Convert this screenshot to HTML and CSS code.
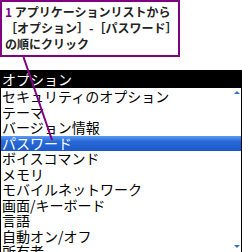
FILE: index.html
```html
<!DOCTYPE html>
<html lang="ja">
<head>
    <meta charset="UTF-8">
    <meta name="viewport" content="width=device-width, initial-scale=1.0">
    <title>オプション - パスワード</title>
    <link rel="stylesheet" href="styles.css">
</head>
<body>
    <div class="page">
        <!-- Step callout -->
        <div class="callout">
            <p class="callout-text"><span class="step">1</span> アプリケーションリストから<br>［オプション］-［パスワード］<br>の順にクリック</p>
        </div>

        <!-- Device screen -->
        <div class="screen">
            <div class="screen-title">オプション</div>
            <ul class="menu">
                <li>セキュリティのオプション</li>
                <li>テーマ</li>
                <li>バージョン情報</li>
                <li class="selected">パスワード</li>
                <li>ボイスコマンド</li>
                <li>メモリ</li>
                <li>モバイルネットワーク</li>
                <li>画面/キーボード</li>
                <li>言語</li>
                <li>自動オン/オフ</li>
                <li>所有者</li>
            </ul>
            <span class="scroll-up"></span>
            <span class="scroll-down"></span>
        </div>

        <!-- Leader line from callout to the menu item -->
        <svg class="leader" width="242" height="252" viewBox="0 0 242 252">
            <line x1="23.5" y1="57" x2="52" y2="140" stroke="#800080" stroke-width="2"/>
        </svg>
    </div>
</body>
</html>
```

FILE: styles.css
```css
body {
    margin: 0;
    background-color: #fff;
    font-family: "Noto Sans CJK JP", "Noto Sans", sans-serif;
}

.page {
    position: relative;
    width: 242px;
    height: 252px;
    overflow: hidden;
}

.callout {
    width: 171px;
    border: 2px solid #800080;
    padding: 2px 3px 3px 2px;
    margin-left: 0;
    background-color: #fff;
}

.callout-text {
    margin: 0 0 0 1px;
    font-size: 12px;
    font-weight: bold;
    line-height: 16px;
    color: #222;
    white-space: nowrap;
}

.step {
    color: #800080;
}

.screen {
    position: relative;
    margin-top: 13px;
}

.screen-title {
    height: 18px;
    line-height: 18px;
    padding-left: 2px;
    background-color: #000;
    color: #fff;
    font-size: 14px;
}

.menu {
    list-style: none;
    margin: 0;
    padding: 1px 0 0 0;
    height: 163px;
    border: 1px solid #000;
    border-top: none;
    overflow: hidden;
}

.menu li {
    height: 15.5px;
    line-height: 15.5px;
    padding-left: 1px;
    font-size: 14px;
    color: #000;
    white-space: nowrap;
}

.menu li.selected {
    background: linear-gradient(#5a9cf2, #2a6ad8 35%, #1b58c8);
    color: #fff;
}

.scroll-up,
.scroll-down {
    position: absolute;
    right: 2px;
    width: 0;
    height: 0;
    border-left: 3px solid transparent;
    border-right: 3px solid transparent;
}

.scroll-up {
    top: 21px;
    border-bottom: 3px solid #2f6fd0;
}

.scroll-down {
    top: 175px;
    border-top: 3px solid #2f6fd0;
}

.leader {
    position: absolute;
    left: 0;
    top: 0;
    pointer-events: none;
}
```
